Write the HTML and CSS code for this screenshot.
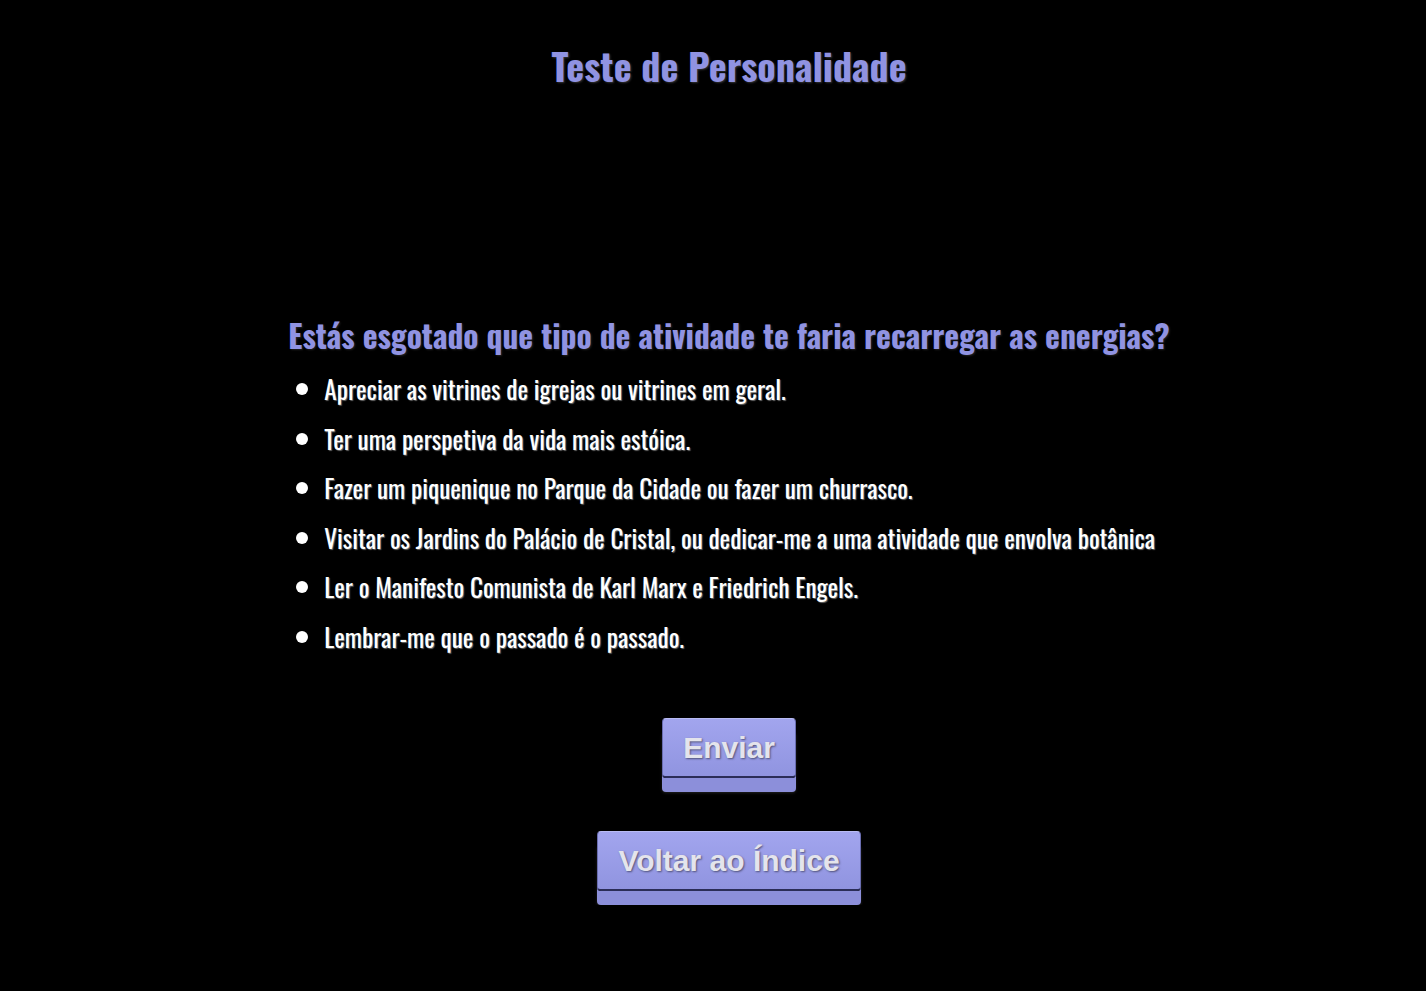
FILE: index.html
```html
<!DOCTYPE html>
<html lang="pt">
<head>
<meta charset="utf-8">
<title>Teste de Personalidade</title>
<link rel="stylesheet" href="styles.css">
</head>
<body>
<main class="page">
  <h1 class="title">Teste de Personalidade</h1>
  <section class="quiz">
    <h2 class="question">Estás esgotado que tipo de atividade te faria recarregar as energias?</h2>
    <ul class="options">
      <li>Apreciar as vitrines de igrejas ou vitrines em geral.</li>
      <li>Ter uma perspetiva da vida mais estóica.</li>
      <li>Fazer um piquenique no Parque da Cidade ou fazer um churrasco.</li>
      <li>Visitar os Jardins do Palácio de Cristal, ou dedicar-me a uma atividade que envolva botânica</li>
      <li>Ler o Manifesto Comunista de Karl Marx e Friedrich Engels.</li>
      <li>Lembrar-me que o passado é o passado.</li>
    </ul>
  </section>
  <div class="actions">
    <button class="btn">Enviar</button>
    <button class="btn">Voltar ao Índice</button>
  </div>
</main>
</body>
</html>
```
FILE: styles.css
```css
html, body {
  margin: 0;
  background: #000;
}
.page {
  display: flex;
  flex-direction: column;
  align-items: center;
  padding-left: 32px;
  font-family: "Oswald", "Roboto Condensed", sans-serif;
}
.title {
  margin: 37px 0 0;
  font-size: 38px;
  font-weight: bold;
  color: #9093e2;
  line-height: 56px;
  text-shadow: 1px 1px 2px #333;
}
.quiz {
  margin-top: 220px;
  width: fit-content;
}
.question {
  margin: 0;
  font-size: 31.5px;
  line-height: 44px;
  font-weight: bold;
  color: #9093e2;
  text-shadow: 1px 1px 2px #222;
}
.options {
  margin: 17px 0 0;
  padding: 0;
  list-style: none;
  color: #fff;
}
.options li {
  display: flex;
  align-items: center;
  gap: 16px;
  font-size: 25.2px;
  line-height: 30px;
  margin-bottom: 19.6px;
  text-shadow: 1px 1px 1px #666;
}
.options li::before {
  content: "";
  flex: none;
  width: 12px;
  height: 12px;
  margin-left: 8px;
  border-radius: 50%;
  background: #fff;
}
.actions {
  margin-top: 46px;
  display: flex;
  flex-direction: column;
  align-items: center;
  gap: 39px;
}
.btn {
  font-family: "Liberation Sans", Arial, sans-serif;
  font-weight: bold;
  font-size: 30px;
  line-height: 34px;
  color: #e4e4ec;
  text-shadow: 1px 1px 2px #50527a;
  background: linear-gradient(#a2a5ee, #9094e0);
  border: 1px solid #6a6db0;
  border-top-color: #b8bbf4;
  border-bottom: 2px solid #2b2d58;
  border-radius: 4px;
  padding: 12px 20px 11px;
  box-shadow: 0 14px 0 #8c8fda, 0 15px 3px #222;
  margin-bottom: 14px;
  cursor: pointer;
}
```
